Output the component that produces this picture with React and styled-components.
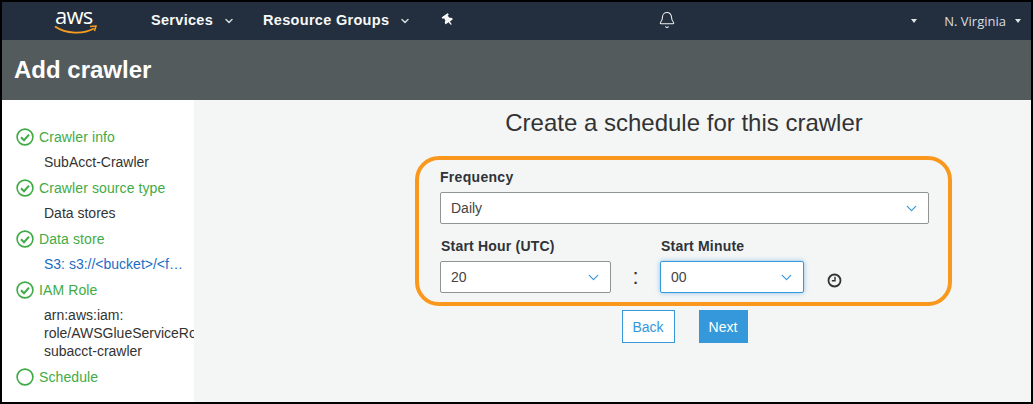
import React from 'react'
import styled, { createGlobalStyle } from 'styled-components'
import { Bell, ChevronDown } from 'lucide-react'
import { FaThumbtack } from 'react-icons/fa'

const GlobalStyle = createGlobalStyle`
html, body {
  margin: 0;
  padding: 0;
  background: #000;
}
* {
  box-sizing: border-box;
}
`;

const Page = styled.div`
width: 1033px;
height: 404px;
border: 2px solid #000;
display: flex;
flex-direction: column;
overflow: hidden;
font-family: "Liberation Sans", Arial, sans-serif;
background: #f4f6f6;
`;

const Nav = styled.nav`
height: 38px;
flex: none;
background: #232f3e;
display: flex;
align-items: center;
color: #fff;
`;

const Logo = styled.div`
width: 149px;
padding-left: 52px;
flex: none;
display: flex;
flex-direction: column;
`;

const LogoText = styled.div`
font-family: "Open Sans", sans-serif;
font-size: 22px;
line-height: 22px;
color: #fff;
margin-top: -4px;
letter-spacing: -0.8px;
padding-left: 1px;
`;

const Swoosh = styled.svg`
display: block;
margin-top: -1px;
`;

const NavItem = styled.div`
display: flex;
align-items: center;
font-size: 14.5px;
font-weight: bold;
letter-spacing: 0.3px;
margin-right: ${p => p.$gap}px;
color: #f7f8f8;
margin-top: -2px;
`;

const NavChevron = styled(ChevronDown)`
margin-left: 10px;
margin-top: 2px;
color: #d5d9dc;
`;

const Pin = styled(FaThumbtack)`
font-size: 12px;
margin-left: 3px;
margin-top: -2px;
transform: rotate(-35deg);
color: #f7f8f8;
`;

const BellWrap = styled.div`
margin-left: 204px;
display: flex;
width: 20px;
color: #f1f3f4;
margin-top: -2px;
`;

const Caret = styled.span`
width: 0;
height: 0;
border-left: 3.5px solid transparent;
border-right: 3.5px solid transparent;
border-top: 4px solid #dfe3e6;
flex: none;
margin-left: ${p => p.$left}px;
`;

const Region = styled.div`
font-family: "Open Sans", sans-serif;
font-size: 13px;
color: #d9dee3;
margin-left: 27px;
`;

const Header = styled.header`
height: 60px;
flex: none;
background: #545b5c;
display: flex;
align-items: center;
padding-left: 12px;
`;

const Title = styled.h1`
margin: 0;
font-size: 24px;
font-weight: bold;
color: #fff;
`;

const Body = styled.div`
flex: 1;
display: flex;
min-height: 0;
`;

const Sidebar = styled.aside`
width: 192px;
flex: none;
background: #fff;
padding-top: 27px;
overflow: hidden;
`;

const StepHead = styled.div`
display: flex;
align-items: center;
height: 20px;
padding-left: 14px;
gap: 5px;
font-size: 14px;
letter-spacing: 0.1px;
color: #3fab46;
`;

const StepBody = styled.div`
margin: ${p => (p.$lines ? '6px 0 7px 42px' : '8px 0 8px 42px')};
font-size: 14px;
line-height: ${p => (p.$lines ? 18 : 15)}px;
color: ${p => (p.$link ? '#1d6dc4' : '#333')};
white-space: nowrap;
`;

const Main = styled.main`
flex: 1;
padding: 9px 0 0 221px;
`;

const Column = styled.div`
width: 537px;
display: flex;
flex-direction: column;
align-items: center;
`;

const Heading = styled.h2`
margin: 0;
height: 47px;
line-height: 28px;
font-size: 24px;
font-weight: normal;
color: #333;
padding-left: 1px;
`;

const Panel = styled.div`
width: 537px;
height: 150px;
border: 4px solid #f9981d;
border-radius: 24px;
padding: 9px 19px 0 21px;
`;

const Label = styled.div`
font-size: 14px;
font-weight: bold;
color: #2f3338;
height: 16px;
line-height: 16px;
letter-spacing: ${p => (p.$inset ? 0.2 : 0.3)}px;
padding-left: ${p => (p.$inset ? 1 : 0)}px;
margin-bottom: 7px;
`;

const Select = styled.div`
height: 32px;
width: ${p => p.$width};
background: #fff;
border: 1px solid ${p => (p.$focus ? '#3498db' : '#8f9496')};
border-radius: 2px;
box-shadow: ${p => (p.$focus ? '0 0 5px rgba(52, 152, 219, 0.55)' : 'none')};
display: flex;
align-items: center;
justify-content: space-between;
padding: 0 8px 0 10px;
font-size: 14px;
color: #444;
`;

const SelectChevron = styled(ChevronDown)`
color: #3498db;
`;

const TimeRow = styled.div`
display: flex;
margin-top: 14px;
`;

const Field = styled.div`
width: ${p => p.$width}px;
flex: none;
`;

const Colon = styled.div`
width: 49px;
flex: none;
text-align: center;
font-size: 22px;
font-weight: normal;
color: #333;
padding-top: 26px;
`;

const Clock = styled.svg`
margin: 35px 0 0 23px;
flex: none;
`;

const Buttons = styled.div`
display: flex;
margin: 4px 0 0 2px;
gap: 24px;
`;

const Button = styled.button`
height: 33px;
width: ${p => p.$width}px;
font-family: inherit;
font-size: 14px;
padding: 0;
border: 1px solid #3498db;
background: ${p => (p.$primary ? '#3498db' : '#fff')};
color: ${p => (p.$primary ? '#fff' : '#3498db')};
`;

const CheckIcon = ({ done }) => (
  <svg width="18" height="18" viewBox="0 0 18 18" fill="none" stroke="#3fab46" strokeWidth="1.6">
    <circle cx="9" cy="9" r="7.9" />
    {done && <path d="M5 9.2l3 3 5-5.6" strokeWidth="2" />}
  </svg>
)

const steps = [
  { name: 'Crawler info', detail: ['SubAcct-Crawler'] },
  { name: 'Crawler source type', detail: ['Data stores'] },
  { name: 'Data store', detail: ['S3: s3://<bucket>/<f…'], link: true },
  { name: 'IAM Role', detail: ['arn:aws:iam:', 'role/AWSGlueServiceRole-', 'subacct-crawler'] },
  { name: 'Schedule', todo: true },
]

const App = () => {
  return (
    <Page>
      <GlobalStyle />
      <Nav>
        <Logo>
          <LogoText>aws</LogoText>
          <Swoosh width="44" height="10" viewBox="0 0 44 10" fill="none">
            <path d="M1 1.5C12 9 29 9.5 40 3.5" stroke="#f79c1f" strokeWidth="1.8" />
            <path d="M36 1.5l6-.5-1.5 5" stroke="#f79c1f" strokeWidth="1.5" />
          </Swoosh>
        </Logo>
        <NavItem $gap={28}>Services<NavChevron size={12} strokeWidth={3} /></NavItem>
        <NavItem $gap={28}>Resource Groups<NavChevron size={12} strokeWidth={3} /></NavItem>
        <Pin />
        <BellWrap><Bell size={18} strokeWidth={1.4} /></BellWrap>
        <Caret $left={233} />
        <Region>N. Virginia</Region>
        <Caret $left={9} />
      </Nav>
      <Header>
        <Title>Add crawler</Title>
      </Header>
      <Body>
        <Sidebar>
          {steps.map(step => (
            <div key={step.name}>
              <StepHead>
                <CheckIcon done={!step.todo} />
                {step.name}
              </StepHead>
              {step.detail && (
                <StepBody $link={step.link} $lines={step.detail.length > 1}>
                  {step.detail.map(line => <div key={line}>{line}</div>)}
                </StepBody>
              )}
            </div>
          ))}
        </Sidebar>
        <Main>
          <Column>
            <Heading>Create a schedule for this crawler</Heading>
            <Panel>
              <Label>Frequency</Label>
              <Select $width="489px">Daily<SelectChevron size={17} strokeWidth={1.7} /></Select>
              <TimeRow>
                <Field $width={171}>
                  <Label $inset>Start Hour (UTC)</Label>
                  <Select $width="171px">20<SelectChevron size={17} strokeWidth={1.7} /></Select>
                </Field>
                <Colon>:</Colon>
                <Field $width={144}>
                  <Label $inset>Start Minute</Label>
                  <Select $width="144px" $focus>00<SelectChevron size={17} strokeWidth={1.7} /></Select>
                </Field>
                <Clock width="15" height="15" viewBox="0 0 15 15" fill="none" stroke="#333">
                  <circle cx="7.5" cy="7.5" r="6" strokeWidth="1.8" />
                  <path d="M8 3.8v4H4.8" strokeWidth="1.4" />
                </Clock>
              </TimeRow>
            </Panel>
            <Buttons>
              <Button $width={53}>Back</Button>
              <Button $width={49} $primary>Next</Button>
            </Buttons>
          </Column>
        </Main>
      </Body>
    </Page>
  )
}

export default App
